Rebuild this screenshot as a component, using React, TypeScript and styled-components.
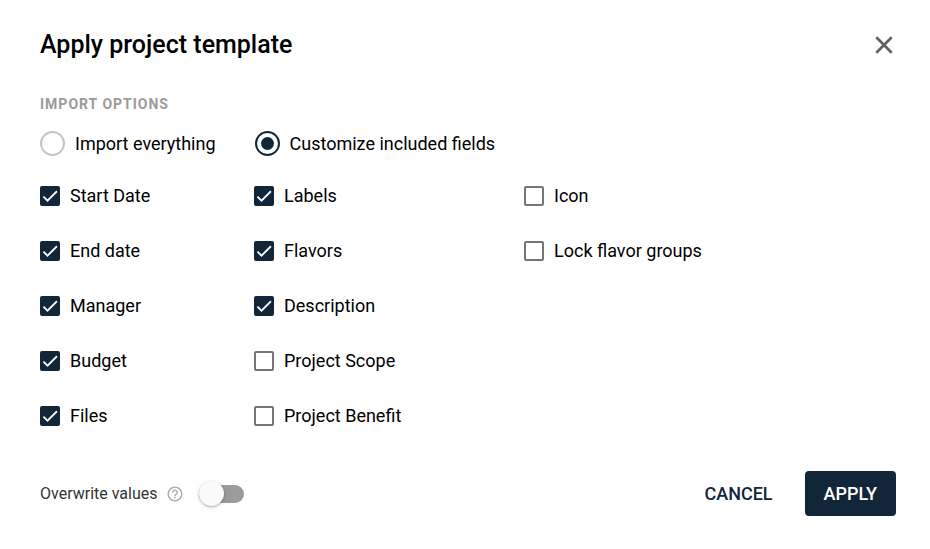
import React, { useState } from "react";
import styled, { createGlobalStyle } from "styled-components";

const NAVY = "#12263a";

const GlobalStyle = createGlobalStyle`
  *, *::before, *::after { box-sizing: border-box; }
  body {
    margin: 0;
    background: #fff;
    color: #000;
    font-family: Roboto, "Liberation Sans", sans-serif;
    font-size: 18px;
    line-height: 24px;
  }
  button, input { font: inherit; }
`;

const Dialog = styled.main`
  padding: 30px 34px 32px 40px;
`;

const Header = styled.header`
  display: flex;
  align-items: center;
  justify-content: space-between;
`;

const Title = styled.h1`
  margin: 0;
  font-size: 25px;
  font-weight: 500;
  line-height: 30px;
`;

const CloseButton = styled.button`
  display: flex;
  padding: 0;
  border: 0;
  background: none;
  cursor: pointer;
`;

const Options = styled.fieldset`
  margin: 32px 0 0;
  padding: 0;
  border: 0;
  min-width: 0;
`;

const Legend = styled.legend`
  padding: 0;
  color: #9b9b9b;
  font-size: 14px;
  font-weight: 700;
  line-height: 24px;
  letter-spacing: 1px;
`;

const ModeRow = styled.div`
  display: flex;
  gap: 39px;
  margin-top: 15px;
`;

const RadioLabel = styled.label`
  display: flex;
  align-items: center;
  gap: 10px;
  cursor: pointer;
`;

const Radio = styled.input.attrs({ type: "radio" })`
  appearance: none;
  display: grid;
  place-items: center;
  flex: none;
  width: 25px;
  height: 25px;
  margin: 0;
  border: 2px solid #c4c4c4;
  border-radius: 50%;

  &:checked { border-color: ${NAVY}; }
  &:checked::before {
    content: "";
    width: 13px;
    height: 13px;
    border-radius: 50%;
    background: ${NAVY};
  }
`;

const FieldGrid = styled.div`
  display: grid;
  grid-template-columns: 214fr 270fr 372fr;
  margin-top: 28px;
`;

const FieldColumn = styled.div`
  display: flex;
  flex-direction: column;
  align-items: flex-start;
  gap: 31px;
`;

const CheckLabel = styled.label`
  display: flex;
  align-items: center;
  gap: 10px;
  cursor: pointer;
`;

const Checkbox = styled.input.attrs({ type: "checkbox" })`
  appearance: none;
  grid-area: 1 / 1;
  width: 20px;
  height: 20px;
  margin: 0;
  border: 2px solid #757575;
  border-radius: 2px;

  &:checked {
    border-color: ${NAVY};
    background: ${NAVY};
  }
`;

const CheckBoxFrame = styled.span`
  display: grid;
  flex: none;
`;

const CheckMark = styled.svg`
  grid-area: 1 / 1;
  pointer-events: none;
  visibility: hidden;

  ${Checkbox}:checked + & { visibility: visible; }
`;

const Footer = styled.footer`
  display: flex;
  align-items: center;
  justify-content: space-between;
  margin-top: 43px;
`;

const Overwrite = styled.div`
  display: flex;
  align-items: center;
  color: #333;
  font-size: 16px;
`;

const HelpButton = styled.button`
  display: flex;
  margin: 0 15px 0 8px;
  padding: 0;
  border: 0;
  background: none;
  cursor: help;
`;

const Switch = styled.input.attrs({ type: "checkbox", role: "switch" })`
  appearance: none;
  display: flex;
  align-items: center;
  width: 45px;
  height: 18px;
  margin: 0;
  border-radius: 9px;
  background: #9b9b9b;
  cursor: pointer;

  &::before {
    content: "";
    width: 25px;
    height: 25px;
    flex: none;
    border-radius: 50%;
    background: #fafafa;
    box-shadow: 0 1px 3px rgba(0, 0, 0, 0.35);
  }
  &:checked {
    justify-content: flex-end;
    background: ${NAVY};
  }
`;

const Actions = styled.div`
  display: flex;
  gap: 13px;
`;

const ActionButton = styled.button<{ $primary?: boolean }>`
  height: 45px;
  padding: 0 19px;
  border: 0;
  border-radius: 4px;
  background: ${({ $primary }) => ($primary ? NAVY : "transparent")};
  color: ${({ $primary }) => ($primary ? "#fff" : NAVY)};
  font-weight: 500;
  cursor: pointer;
`;

const columns = [
  ["Start Date", "End date", "Manager", "Budget", "Files"],
  ["Labels", "Flavors", "Description", "Project Scope", "Project Benefit"],
  ["Icon", "Lock flavor groups"],
];

const initiallyOff = ["Project Scope", "Project Benefit", "Icon", "Lock flavor groups"];

function Field({ name }: { name: string }) {
  return (
    <CheckLabel>
      <CheckBoxFrame>
        <Checkbox name={name} defaultChecked={!initiallyOff.includes(name)} />
        <CheckMark width="20" height="20" viewBox="0 0 24 24" aria-hidden="true">
          <path d="M4.1 12.7 9 17.6 20.3 6.3" fill="none" stroke="#fff" strokeWidth="2.13" />
        </CheckMark>
      </CheckBoxFrame>
      {name}
    </CheckLabel>
  );
}

export default function App() {
  const [mode, setMode] = useState("custom");

  return (
    <>
      <GlobalStyle />
      <Dialog>
        <Header>
          <Title>Apply project template</Title>
          <CloseButton type="button" aria-label="Close">
            <svg width="24" height="24" viewBox="0 0 24 24" aria-hidden="true">
              <path d="M4.3 4.3 19.7 19.7M19.7 4.3 4.3 19.7" fill="none" stroke="#616161" strokeWidth="2.7" />
            </svg>
          </CloseButton>
        </Header>

        <Options>
          <Legend>IMPORT OPTIONS</Legend>
          <ModeRow>
            <RadioLabel>
              <Radio name="mode" checked={mode === "all"} onChange={() => setMode("all")} />
              Import everything
            </RadioLabel>
            <RadioLabel>
              <Radio name="mode" checked={mode === "custom"} onChange={() => setMode("custom")} />
              Customize included fields
            </RadioLabel>
          </ModeRow>
          <FieldGrid>
            {columns.map((names) => (
              <FieldColumn key={names[0]}>
                {names.map((name) => (
                  <Field key={name} name={name} />
                ))}
              </FieldColumn>
            ))}
          </FieldGrid>
        </Options>

        <Footer>
          <Overwrite>
            <label htmlFor="overwrite">Overwrite values</label>
            <HelpButton type="button" aria-label="Help">
              <svg width="18" height="18" viewBox="0 0 24 24" aria-hidden="true">
                <path
                  fill="#adadad"
                  d="M11 18h2v-2h-2v2zm1-16C6.48 2 2 6.48 2 12s4.48 10 10 10 10-4.48 10-10S17.52 2 12 2zm0 18c-4.41 0-8-3.59-8-8s3.59-8 8-8 8 3.59 8 8-3.59 8-8 8zm0-14c-2.21 0-4 1.79-4 4h2c0-1.1.9-2 2-2s2 .9 2 2c0 2-3 1.75-3 5h2c0-2.25 3-2.5 3-5 0-2.21-1.79-4-4-4z"
                />
              </svg>
            </HelpButton>
            <Switch id="overwrite" />
          </Overwrite>
          <Actions>
            <ActionButton type="button">CANCEL</ActionButton>
            <ActionButton type="button" $primary>
              APPLY
            </ActionButton>
          </Actions>
        </Footer>
      </Dialog>
    </>
  );
}
